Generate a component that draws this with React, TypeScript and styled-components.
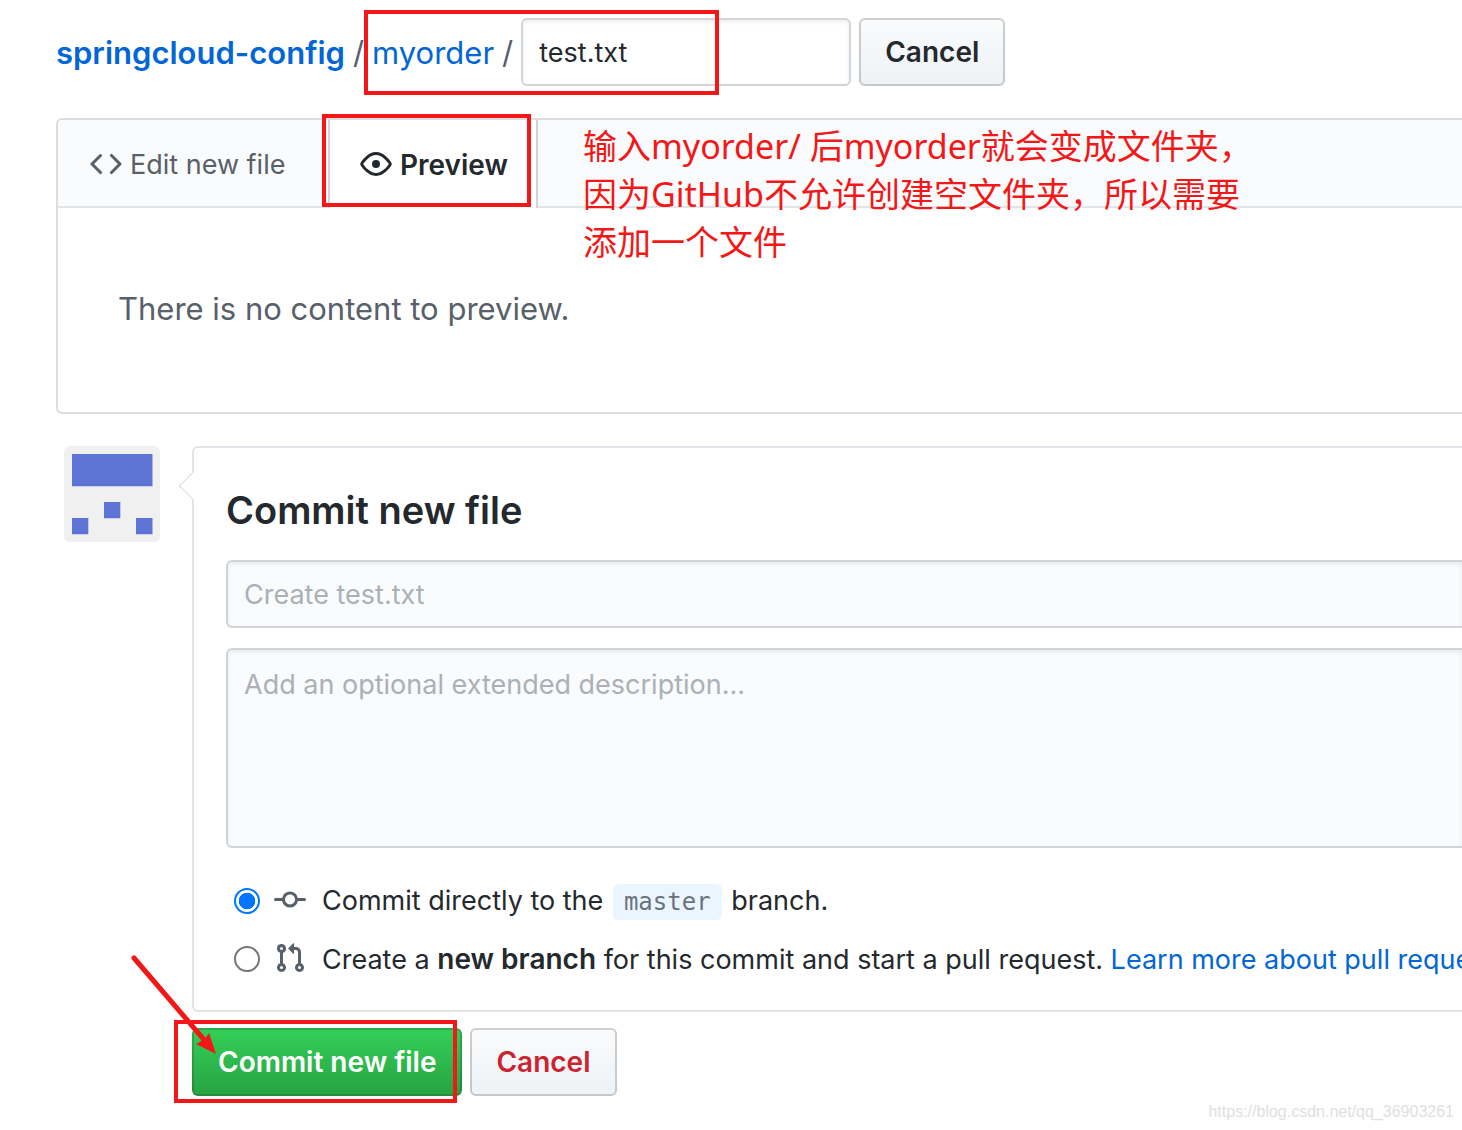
import React from "react";
import styled, { createGlobalStyle, css } from "styled-components";

const sans = `Inter, "Liberation Sans", sans-serif`;
const red = "#f31717";

const GlobalStyle = createGlobalStyle`
  *, *::before, *::after { box-sizing: border-box; }
  body {
    margin: 0;
    background: #fff;
    color: #24292e;
    font-family: ${sans};
    font-size: 27px;
    line-height: 40px;
    overflow-x: hidden;
  }
`;

const Page = styled.main`
  position: relative;
  padding: 18px 0 34px 56px;
  overflow: hidden;
`;

const PathBar = styled.div`
  display: flex;
  align-items: center;
  gap: 8px;
  margin-bottom: 32px;
`;

const Crumbs = styled.nav`
  display: flex;
  gap: 8px;
  padding-top: 2px;
  font-size: 31px;
  color: #586069;
`;

const Link = styled.a<{ $strong?: boolean }>`
  color: #0366d6;
  text-decoration: none;
  font-weight: ${(p) => (p.$strong ? 600 : 400)};
`;

const field = css`
  display: block;
  font-family: ${sans};
  font-size: 27px;
  line-height: 40px;
  color: #24292e;
  border: 2px solid #d1d5da;
  border-radius: 6px;
  padding: 12px 16px;
  box-shadow: inset 0 2px 4px rgba(27, 31, 35, 0.075);
  outline: none;
  &::placeholder {
    color: #abb0b7;
    opacity: 1;
  }
`;

const NameInput = styled.input`
  ${field}
  width: 330px;
  height: 68px;
  background: #fff;
`;

const Button = styled.button<{ $kind?: "primary" | "danger" }>`
  height: 68px;
  padding: 0 24px;
  font-family: ${sans};
  font-size: 28px;
  font-weight: 600;
  line-height: 40px;
  border: 2px solid rgba(27, 31, 35, 0.2);
  border-radius: 6px;
  background-origin: border-box;
  color: ${(p) =>
    p.$kind === "primary" ? "#fff" : p.$kind === "danger" ? "#cb2431" : "#24292e"};
  background-image: ${(p) =>
    p.$kind === "primary"
      ? "linear-gradient(180deg, #34d058, #28a745 90%)"
      : "linear-gradient(180deg, #fafbfc, #eff3f6 90%)"};
`;

const Panel = styled.section`
  border: 2px solid #ddd;
  border-right: 0;
  border-radius: 6px 0 0 6px;
  margin-bottom: 32px;
`;

const Tabs = styled.div`
  display: flex;
  height: 88px;
  background: #fafbfc;
  border-bottom: 2px solid #e1e4e8;
  border-radius: 6px 0 0 0;
`;

const Tab = styled.button<{ $active?: boolean }>`
  display: flex;
  align-items: center;
  gap: 8px;
  height: 88px;
  border: 0 solid #d1d5da;
  background: transparent;
  font-family: ${sans};
  font-size: 27px;
  line-height: 40px;
  color: #586069;
  ${(p) =>
    p.$active
      ? css`
          padding: 2px 28px 0 30px;
          border-width: 0 2px;
          background: #fff;
          color: #24292e;
          font-size: 28px;
          font-weight: 600;
        `
      : css`
          width: 270px;
          padding: 2px 32px 0;
        `}
`;

const Empty = styled.p`
  margin: 0;
  padding: 81px 60px 83px;
  font-size: 31px;
  color: #586069;
`;

const CommitArea = styled.form`
  display: grid;
  grid-template-columns: 96px minmax(0, 1fr);
  column-gap: 32px;
  row-gap: 16px;
  padding-left: 8px;
`;

const Avatar = styled.svg`
  display: block;
  width: 96px;
  height: 96px;
  border-radius: 6px;
`;

const CommitBox = styled.section`
  position: relative;
  border: 2px solid #e1e4e8;
  border-right: 0;
  border-radius: 6px 0 0 6px;
  padding: 38px 0 31px 32px;

  &::before {
    content: "";
    position: absolute;
    left: -11px;
    top: 28px;
    width: 20px;
    height: 20px;
    background: #fff;
    border: solid #ddd;
    border-width: 0 0 1px 1px;
    transform: rotate(45deg);
  }
`;

const Title = styled.h1`
  margin: 0 0 26px;
  font-size: 38px;
  line-height: 48px;
  font-weight: 600;
`;

const Summary = styled.input`
  ${field}
  width: 100%;
  height: 68px;
  background: #fafbfc;
  border-right: 0;
  border-radius: 6px 0 0 6px;
  margin-bottom: 20px;
`;

const Description = styled.textarea`
  ${field}
  width: 100%;
  height: 200px;
  padding-top: 15px;
  resize: none;
  background: #fafbfc;
  border-right: 0;
  border-radius: 6px 0 0 6px;
  margin-bottom: 33px;
`;

const Option = styled.div`
  display: flex;
  align-items: center;
  height: 40px;
  padding-left: 8px;
  white-space: nowrap;
  overflow: hidden;
  & + & {
    margin-top: 18px;
  }
`;

const Radio = styled.input`
  appearance: none;
  flex: none;
  width: 26px;
  height: 26px;
  margin: 0 14px 0 0;
  border: 2px solid #767676;
  border-radius: 50%;
  background: #fff;
  &:checked {
    border-color: #0075ff;
    background: radial-gradient(circle closest-side, #0075ff 72%, #fff 78%);
  }
`;

const OptionLabel = styled.label`
  display: flex;
  align-items: center;
  gap: 16px;
`;

const Branch = styled.code`
  display: inline-block;
  height: 36px;
  margin: 0 2px;
  padding: 0 11px;
  border-radius: 6px;
  background: #eaf5ff;
  color: #6a737d;
  font-family: "DejaVu Sans Mono", monospace;
  font-size: 24px;
  line-height: 36px;
`;

const Strong = styled.strong`
  font-size: 28px;
  font-weight: 600;
`;

const Actions = styled.div`
  grid-column: 2;
  display: flex;
  gap: 8px;
`;

const Octicon = styled.svg<{ $muted?: boolean }>`
  flex: none;
  width: 32px;
  height: 32px;
  margin-bottom: 2px;
  fill: ${(p) => (p.$muted ? "#586069" : "currentColor")};
`;

/* Hand-drawn marks float over the page. */
const Mark = styled.div<{ $x: number; $y: number; $w: number; $h: number }>`
  position: absolute;
  left: ${(p) => p.$x}px;
  top: ${(p) => p.$y}px;
  width: ${(p) => p.$w}px;
  height: ${(p) => p.$h}px;
  border: 4px solid ${red};
  pointer-events: none;
`;

const Arrow = styled.svg`
  position: absolute;
  left: 128px;
  top: 950px;
  width: 96px;
  height: 110px;
  pointer-events: none;
`;

const Note = styled.p`
  position: absolute;
  left: 583px;
  top: 122px;
  margin: 0;
  color: ${red};
  font-family: "Noto Sans", "Noto Sans CJK SC", sans-serif;
  font-size: 34px;
  line-height: 48px;
  white-space: nowrap;
`;

const Watermark = styled.small`
  position: absolute;
  right: 8px;
  bottom: 8px;
  font-family: "Liberation Sans", Arial, sans-serif;
  font-size: 16px;
  line-height: 20px;
  color: #e0e0e0;
`;

const icons = {
  code: "M4.72 3.22a.75.75 0 011.06 1.06L2.06 8l3.72 3.72a.75.75 0 11-1.06 1.06L.47 8.53a.75.75 0 010-1.06l4.25-4.25zm6.56 0a.75.75 0 10-1.06 1.06L13.94 8l-3.72 3.72a.75.75 0 101.06 1.06l4.25-4.25a.75.75 0 000-1.06l-4.25-4.25z",
  eye: "M1.679 7.932c.412-.621 1.242-1.75 2.366-2.717C5.175 4.242 6.527 3.5 8 3.5c1.473 0 2.824.742 3.955 1.715 1.124.967 1.954 2.096 2.366 2.717a.119.119 0 010 .136c-.412.621-1.242 1.75-2.366 2.717C10.825 11.758 9.473 12.5 8 12.5c-1.473 0-2.824-.742-3.955-1.715C2.92 9.818 2.09 8.69 1.679 8.068a.119.119 0 010-.136zM8 2c-1.981 0-3.67.992-4.933 2.078C1.797 5.169.88 6.423.43 7.1a1.619 1.619 0 000 1.798c.45.678 1.367 1.932 2.637 3.024C4.329 13.008 6.019 14 8 14c1.981 0 3.67-.992 4.933-2.078 1.27-1.091 2.187-2.345 2.637-3.023a1.619 1.619 0 000-1.798c-.45-.678-1.367-1.932-2.637-3.023C11.671 2.992 9.981 2 8 2zm0 8a2 2 0 100-4 2 2 0 000 4z",
  commit:
    "M10.5 7.75a2.5 2.5 0 11-5 0 2.5 2.5 0 015 0zm1.43.75a4.002 4.002 0 01-7.86 0H.75a.75.75 0 110-1.5h3.32a4.001 4.001 0 017.86 0h3.32a.75.75 0 110 1.5h-3.32z",
  pull: "M7.177 3.073L9.573.677A.25.25 0 0110 .854v4.792a.25.25 0 01-.427.177L7.177 3.427a.25.25 0 010-.354zM3.75 2.5a.75.75 0 100 1.5.75.75 0 000-1.5zm-2.25.75a2.25 2.25 0 113 2.122v5.256a2.251 2.251 0 11-1.5 0V5.372A2.25 2.25 0 011.5 3.25zM11 2.5h-1V4h1a1 1 0 011 1v5.628a2.251 2.251 0 101.5 0V5A2.5 2.5 0 0011 2.5zm1 10.25a.75.75 0 111.5 0 .75.75 0 01-1.5 0zM3.75 12a.75.75 0 100 1.5.75.75 0 000-1.5z",
};

function Icon({ name, muted }: { name: keyof typeof icons; muted?: boolean }) {
  return (
    <Octicon viewBox="0 0 16 16" $muted={muted} aria-hidden="true">
      <path fillRule="evenodd" d={icons[name]} />
    </Octicon>
  );
}

export default function App() {
  return (
    <Page>
      <GlobalStyle />
      <PathBar>
        <Crumbs>
          <Link href="#repo" $strong>springcloud-config</Link>
          <span>/</span>
          <Link href="#myorder">myorder</Link>
          <span>/</span>
        </Crumbs>
        <NameInput aria-label="File name" defaultValue="test.txt" />
        <Button type="button">Cancel</Button>
      </PathBar>

      <Panel>
        <Tabs>
          <Tab type="button"><Icon name="code" />Edit new file</Tab>
          <Tab type="button" $active><Icon name="eye" />Preview</Tab>
        </Tabs>
        <Empty>There is no content to preview.</Empty>
      </Panel>

      <CommitArea onSubmit={(e) => e.preventDefault()}>
        <Avatar viewBox="0 0 96 96" role="img" aria-label="Avatar">
          <rect width="96" height="96" fill="#f0f0f0" />
          <path fill="#5e74d4" d="M8 8h80.5v32.3H8zM40 56h16.3v16.3H40zM8 72h16.3v16.3H8zM72 72h16.5v16.3H72z" />
        </Avatar>
        <CommitBox>
          <Title>Commit new file</Title>
          <Summary aria-label="Commit summary" placeholder="Create test.txt" />
          <Description aria-label="Extended description" placeholder="Add an optional extended description…" />
          <Option>
            <Radio type="radio" name="target" id="direct" defaultChecked />
            <OptionLabel htmlFor="direct">
              <Icon name="commit" muted />
              <span>Commit directly to the <Branch>master</Branch> branch.</span>
            </OptionLabel>
          </Option>
          <Option>
            <Radio type="radio" name="target" id="branch" />
            <OptionLabel htmlFor="branch">
              <Icon name="pull" muted />
              <span>
                Create a <Strong>new branch</Strong> for this commit and start a pull request.{" "}
                <Link href="#learn">Learn more about pull requests.</Link>
              </span>
            </OptionLabel>
          </Option>
        </CommitBox>
        <Actions>
          <Button type="submit" $kind="primary">Commit new file</Button>
          <Button type="button" $kind="danger">Cancel</Button>
        </Actions>
      </CommitArea>

      <Mark $x={364} $y={10} $w={355} $h={85} />
      <Mark $x={322} $y={114} $w={209} $h={93} />
      <Mark $x={174} $y={1020} $w={283} $h={83} />
      <Arrow viewBox="0 0 96 110" aria-hidden="true">
        <path d="M6 8L78 92" stroke={red} strokeWidth="5" strokeLinecap="round" />
        <path d="M88 104L81 83L77 89L68 94Z" fill={red} />
      </Arrow>
      <Note>
        输入myorder/ 后myorder就会变成文件夹，<br />
        因为GitHub不允许创建空文件夹，所以需要<br />
        添加一个文件
      </Note>
      <Watermark>https://blog.csdn.net/qq_36903261</Watermark>
    </Page>
  );
}
